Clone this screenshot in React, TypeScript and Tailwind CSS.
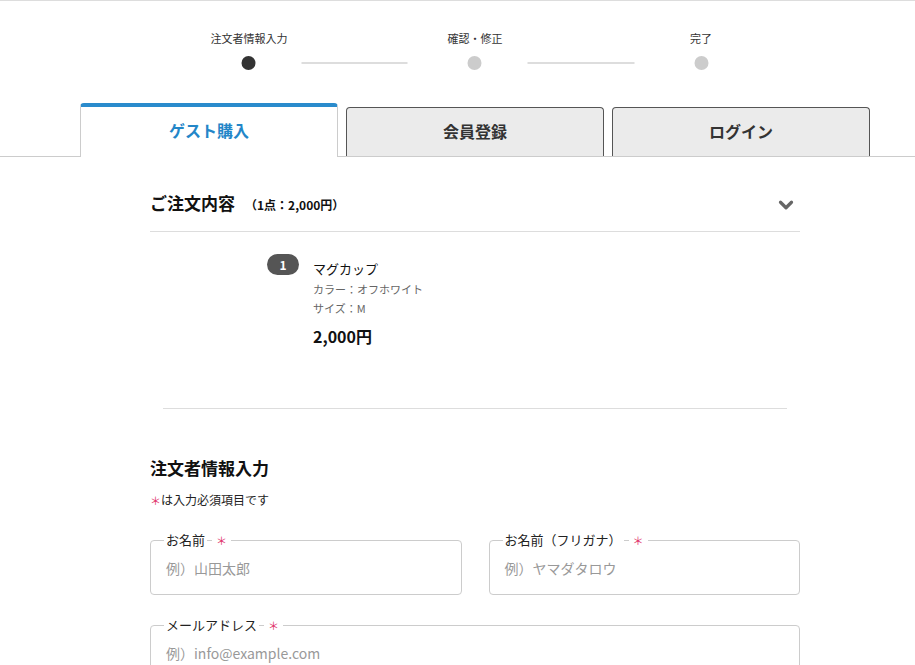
import { ChevronDown } from "lucide-react";

const font = { fontFamily: '"Noto Sans CJK JP", "Noto Sans", sans-serif' };

const steps = ["注文者情報入力", "確認・修正", "完了"];

function Stepper() {
  return (
    <div className="pt-[29px]">
      <div className="mx-auto grid w-[678px] translate-x-[17.5px] grid-cols-3 text-center text-[11px] leading-[16px] text-[#333]">
        {steps.map((s) => (
          <div key={s}>{s}</div>
        ))}
      </div>
      <div className="mt-[10px] flex translate-x-[17.5px] items-center justify-center">
        <span className="h-[14px] w-[14px] rounded-full bg-[#333]" />
        <span className="ml-[46px] h-[2px] w-[106px] bg-[#ddd]" />
        <span className="ml-[60px] h-[14px] w-[14px] rounded-full bg-[#ccc]" />
        <span className="ml-[46px] h-[2px] w-[107px] bg-[#ddd]" />
        <span className="ml-[60px] h-[14px] w-[14px] rounded-full bg-[#ccc]" />
      </div>
    </div>
  );
}

function Tabs() {
  return (
    <div className="mt-[33px] border-b border-[#ccc]">
      <div className="ml-[80px] flex w-[790px] items-end gap-[8px]">
        <div className="-mb-px flex h-[54px] w-[258px] items-center justify-center rounded-t-[4px] border-x border-t-[4px] border-x-[#ccc] border-t-[#2a8bcc] bg-white pb-[4px] text-[16px] font-bold text-[#2386c8]">
          ゲスト購入
        </div>
        <div className="flex h-[49px] w-[258px] items-center justify-center rounded-t-[4px] border-x border-t border-[#555] bg-[#ebebeb] pb-[2px] text-[16px] font-bold text-[#333]">
          会員登録
        </div>
        <div className="flex h-[49px] w-[258px] items-center justify-center rounded-t-[4px] border-x border-t border-[#555] bg-[#ebebeb] pb-[2px] text-[16px] font-bold text-[#333]">
          ログイン
        </div>
      </div>
    </div>
  );
}

function Field({ label, placeholder, className }: { label: string; placeholder: string; className?: string }) {
  return (
    <fieldset className={`h-[64px] rounded-[4px] border border-[#ccc] px-[13px] ${className ?? ""}`}>
      <legend className="flex items-center px-[2px] text-[13px] leading-[18px] text-[#222]">
        <span>{label}</span>
        <span className="mx-[2px] h-px w-[5px] bg-[#ccc]" />
        <span className="px-[2px] text-[11px] text-[#e0306a]">＊</span>
      </legend>
      <div className="pl-[2px] pt-[9px] text-[14px] leading-[20px] text-[#999]">{placeholder}</div>
    </fieldset>
  );
}

export default function App() {
  return (
    <div className="min-h-[665px] overflow-hidden border-t border-[#ddd] bg-white text-[#111]" style={font}>
      <Stepper />
      <Tabs />
      <div className="ml-[150px] w-[650px]">
        <div className="flex h-[75px] items-start justify-between border-b border-[#ddd] pt-[33px]">
          <div className="flex items-baseline leading-[26px]">
            <span className="text-[17px] font-bold">ご注文内容</span>
            <span className="ml-[10px] text-[12px] font-bold">（1点：2,000円）</span>
          </div>
          <ChevronDown size={22} strokeWidth={3.5} className="mr-[3px] mt-[4px] text-[#666]" />
        </div>

        <div className="mx-[13px] flex border-b border-[#ddd] pb-[61px] pl-[104px] pt-[22px]">
          <span className="flex h-[21px] w-[32px] items-center justify-center rounded-full bg-[#555] text-[12px] font-bold text-white">1</span>
          <div className="ml-[14px] pt-[6px]">
            <div className="text-[13px] leading-[18px] text-[#111]">マグカップ</div>
            <div className="mt-[2px] text-[11px] leading-[19px] text-[#666]">カラー：オフホワイト</div>
            <div className="text-[11px] leading-[19px] text-[#666]">サイズ：M</div>
            <div className="mt-[7px] text-[16px] font-bold leading-[22px]">2,000円</div>
          </div>
        </div>

        <h2 className="mt-[47px] text-[17px] font-bold leading-[24px]">注文者情報入力</h2>
        <p className="mt-[11px] text-[12px] leading-[18px] text-[#222]">
          <span className="text-[11px] text-[#e0306a]">＊</span>は入力必須項目です
        </p>

        <div className="mt-[22px] grid grid-cols-2 gap-[27px]">
          <Field label="お名前" placeholder="例）山田太郎" />
          <Field label="お名前（フリガナ）" placeholder="例）ヤマダタロウ" />
        </div>
        <Field className="mt-[21px]" label="メールアドレス" placeholder="例）info@example.com" />
      </div>
    </div>
  );
}
